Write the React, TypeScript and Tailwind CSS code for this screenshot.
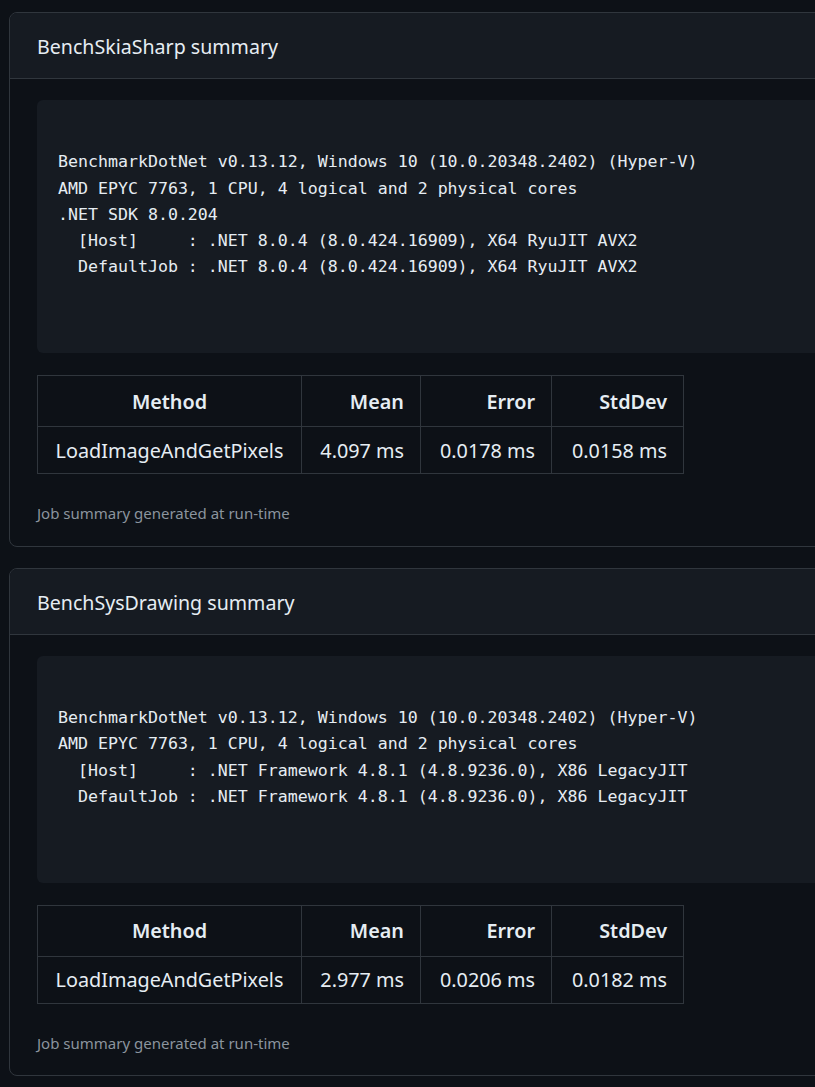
type Row = { method: string; mean: string; error: string; stddev: string }

type Summary = { title: string; env: string[]; row: Row }

const summaries: Summary[] = [
  {
    title: "BenchSkiaSharp summary",
    env: [
      "BenchmarkDotNet v0.13.12, Windows 10 (10.0.20348.2402) (Hyper-V)",
      "AMD EPYC 7763, 1 CPU, 4 logical and 2 physical cores",
      ".NET SDK 8.0.204",
      "  [Host]     : .NET 8.0.4 (8.0.424.16909), X64 RyuJIT AVX2",
      "  DefaultJob : .NET 8.0.4 (8.0.424.16909), X64 RyuJIT AVX2",
    ],
    row: { method: "LoadImageAndGetPixels", mean: "4.097 ms", error: "0.0178 ms", stddev: "0.0158 ms" },
  },
  {
    title: "BenchSysDrawing summary",
    env: [
      "BenchmarkDotNet v0.13.12, Windows 10 (10.0.20348.2402) (Hyper-V)",
      "AMD EPYC 7763, 1 CPU, 4 logical and 2 physical cores",
      "  [Host]     : .NET Framework 4.8.1 (4.8.9236.0), X86 LegacyJIT",
      "  DefaultJob : .NET Framework 4.8.1 (4.8.9236.0), X86 LegacyJIT",
    ],
    row: { method: "LoadImageAndGetPixels", mean: "2.977 ms", error: "0.0206 ms", stddev: "0.0182 ms" },
  },
]

const sans = "font-['Segoe_UI','Noto_Sans','Open_Sans',sans-serif]"

function SummaryCard({ s }: { s: Summary }) {
  return (
    <div className="border border-[#30363d] rounded-lg overflow-hidden w-[900px]">
      {/* header */}
      <div className="h-[66px] bg-[#161b22] border-b border-[#30363d] flex items-center px-[27px] pt-[2px]">
        <h2 className={`${sans} text-[19.6px] text-[#e6edf3]`}>{s.title}</h2>
      </div>

      <div className="px-[27px] pt-[21px] pb-[21px]">
        <pre className="bg-[#161b22] rounded-md px-[21px] pt-[23px] pb-[20px] font-['DejaVu_Sans_Mono',monospace] text-[16.6px] leading-[26.3px] text-[#e6edf3] whitespace-pre">
          {"\n" + s.env.join("\n") + "\n\n\n"}
        </pre>

        <table className={`${sans} mt-[22px] border-collapse text-[19.8px] text-[#e6edf3]`}>
          <thead>
            <tr className="h-[51px]">
              <th className="w-[264px] border border-[#30363d] font-semibold text-center px-4">Method</th>
              <th className="w-[119px] border border-[#30363d] font-semibold text-right px-4">Mean</th>
              <th className="w-[131px] border border-[#30363d] font-semibold text-right px-4">Error</th>
              <th className="w-[132px] border border-[#30363d] font-semibold text-right px-4">StdDev</th>
            </tr>
          </thead>
          <tbody>
            <tr className="h-[47px]">
              <td className="border border-[#30363d] text-center px-4">{s.row.method}</td>
              <td className="border border-[#30363d] text-right px-4">{s.row.mean}</td>
              <td className="border border-[#30363d] text-right px-4">{s.row.error}</td>
              <td className="border border-[#30363d] text-right px-4">{s.row.stddev}</td>
            </tr>
          </tbody>
        </table>

        <p className={`${sans} mt-[28px] text-[15px] text-[#8b949e]`}>Job summary generated at run-time</p>
      </div>
    </div>
  )
}

export default function App() {
  return (
    <div className="min-h-screen bg-[#0d1117] pt-[12px] pl-[9px] overflow-hidden">
      <div className="flex flex-col gap-[21px]">
        {summaries.map((s, i) => (
          <SummaryCard key={i} s={s} />
        ))}
      </div>
    </div>
  )
}
